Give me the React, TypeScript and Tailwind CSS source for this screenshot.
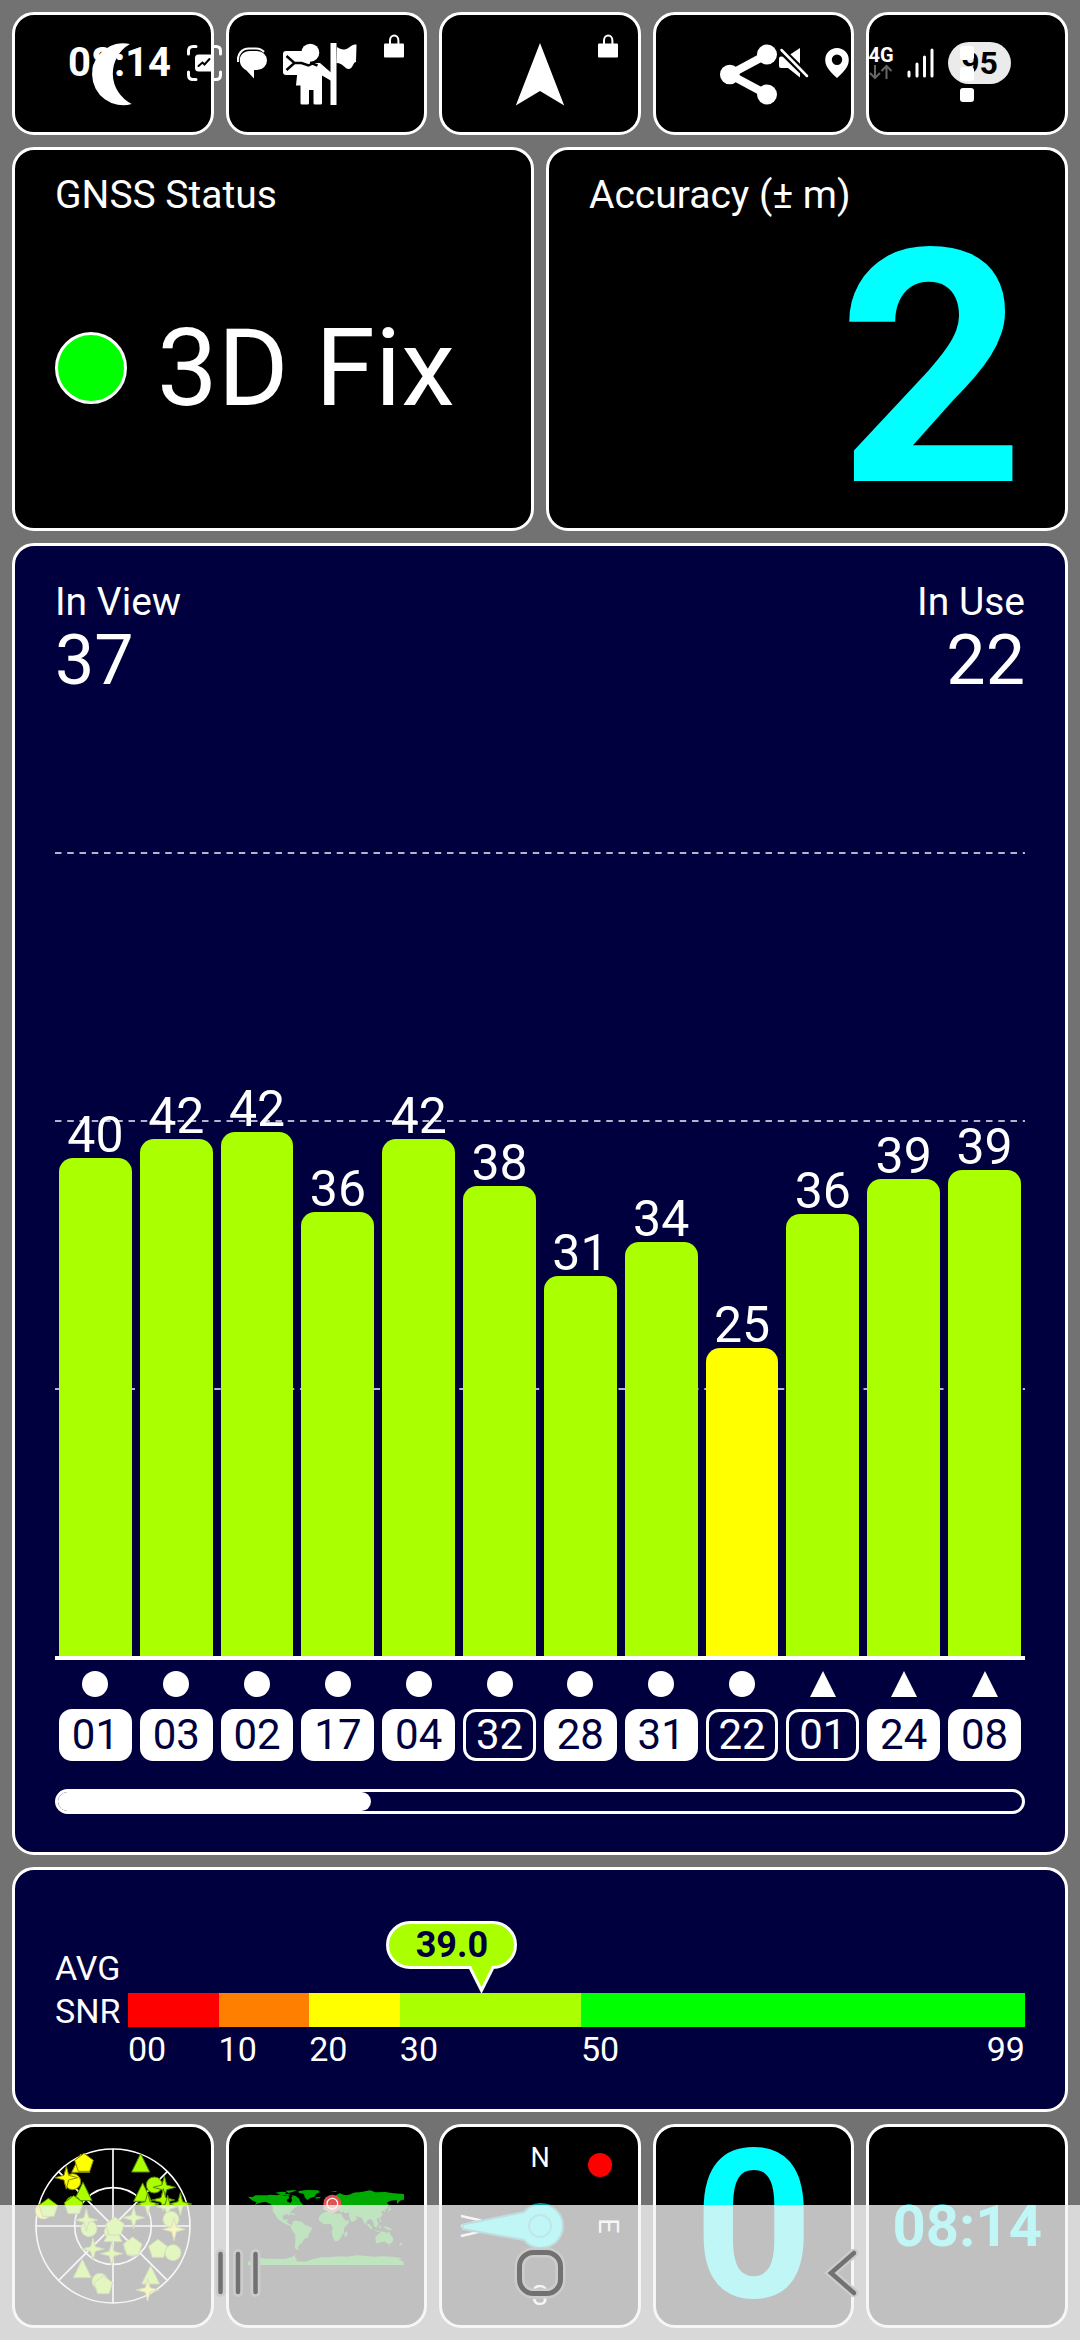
import React from 'react';
import clsx from 'clsx';

type MarkerType = 'circle' | 'triangle' | 'star' | 'pentagon';

interface Satellite {
  prn: string;
  snr: number;
  type: MarkerType;
  used: boolean;
}

// Top of the plot, in dB-Hz
const MAX_SNR = 65;

const SATELLITES: Satellite[] = [
  { prn: '01', snr: 40.3, type: 'circle', used: true },
  { prn: '03', snr: 41.8, type: 'circle', used: true },
  { prn: '02', snr: 42.4, type: 'circle', used: true },
  { prn: '17', snr: 35.9, type: 'circle', used: true },
  { prn: '04', snr: 41.8, type: 'circle', used: true },
  { prn: '32', snr: 38.0, type: 'circle', used: false },
  { prn: '28', snr: 30.7, type: 'circle', used: true },
  { prn: '31', snr: 33.5, type: 'circle', used: true },
  { prn: '22', snr: 24.9, type: 'circle', used: false },
  { prn: '01', snr: 35.7, type: 'triangle', used: false },
  { prn: '24', snr: 38.6, type: 'triangle', used: true },
  { prn: '08', snr: 39.3, type: 'triangle', used: true },
];

const IN_VIEW = 37;
const IN_USE = 22;
const AVG_SNR = 39;

const SNR_RANGES = [
  { from: '00', size: 10, color: 'bg-[#ff0000]' },
  { from: '10', size: 10, color: 'bg-[#ff8000]' },
  { from: '20', size: 10, color: 'bg-[#ffff00]' },
  { from: '30', size: 20, color: 'bg-[#aaff00]' },
  { from: '50', size: 49, color: 'bg-[#00ff00]' },
];

const SKY: { x: number; y: number; type: MarkerType; weak?: boolean }[] = [
  { x: 422, y: 162, type: 'triangle' },
  { x: 242, y: 163, type: 'triangle', weak: true },
  { x: 252, y: 160, type: 'pentagon', weak: true },
  { x: 218, y: 215, type: 'circle', weak: true },
  { x: 199, y: 203, type: 'star', weak: true },
  { x: 249, y: 248, type: 'triangle' },
  { x: 220, y: 283, type: 'circle' },
  { x: 221, y: 287, type: 'pentagon' },
  { x: 130, y: 303, type: 'circle', weak: true },
  { x: 145, y: 295, type: 'pentagon' },
  { x: 463, y: 225, type: 'circle' },
  { x: 493, y: 232, type: 'star' },
  { x: 428, y: 250, type: 'triangle' },
  { x: 443, y: 282, type: 'star' },
  { x: 490, y: 270, type: 'star' },
  { x: 503, y: 290, type: 'star' },
  { x: 541, y: 282, type: 'star' },
  { x: 401, y: 323, type: 'star' },
  { x: 513, y: 328, type: 'circle' },
  { x: 522, y: 358, type: 'star', weak: true },
  { x: 267, y: 356, type: 'circle' },
  { x: 259, y: 330, type: 'star' },
  { x: 337, y: 366, type: 'circle' },
  { x: 339, y: 371, type: 'triangle' },
  { x: 345, y: 351, type: 'pentagon' },
  { x: 398, y: 415, type: 'circle' },
  { x: 398, y: 411, type: 'pentagon' },
  { x: 279, y: 417, type: 'star' },
  { x: 335, y: 431, type: 'star' },
  { x: 474, y: 418, type: 'pentagon' },
  { x: 519, y: 428, type: 'circle' },
  { x: 247, y: 479, type: 'triangle' },
  { x: 300, y: 514, type: 'circle' },
  { x: 310, y: 527, type: 'pentagon' },
  { x: 452, y: 498, type: 'triangle' },
  { x: 443, y: 540, type: 'star', weak: true },
];

const SKY_SHAPES: Record<MarkerType, string> = {
  circle: 'M-24 0a24 24 0 1 0 48 0a24 24 0 1 0 -48 0z',
  triangle: 'M0 -31L27 24H-27z',
  star: 'M0 -34L7 -7L34 0L7 7L0 34L-7 7L-34 0L-7 -7z',
  pentagon: 'M0 -30L28 -9L17 24H-17L-28 -9z',
};

const card = 'rounded-[22px] border-3 border-white';

/* ---------- Toolbar icons ---------- */

const MoonIcon = () => (
  <svg className="size-16" viewBox="0 0 64 64" fill="#fff">
    <path d="M49 2A31 31 0 1 0 50.7 62A34 34 0 0 1 49 2z" />
  </svg>
);

const GuideIcon = () => (
  <svg className="size-16" viewBox="0 0 64 64" fill="#fff">
    <circle cx="16.3" cy="10.7" r="9" />
    <path d="M9 21h5l2.500 2L19 21h7l11.500 10v8L28 33.500V61q0 1.500-1.500 1.500h-5.500q-1.500 0-1.500-1.500V48H15v13q0 1.500-1.500 1.500H8q-1.500 0-1.500-1.500V43.500H2L4 24q.5-3 5-3z" />
    <rect x="36.500" y="1" width="6" height="62" />
    <path d="M43 5c4 3 8 3.500 12 .5c3-2.500 5-3 7.500-3L62 20c-3 0-3 7-7.500 7c-4 0-5-6-12-6z" />
  </svg>
);

const ArrowIcon = () => (
  <svg className="size-16" viewBox="0 0 64 64" fill="#fff">
    <path d="M32 1L56.200 63.500L32 49L7.800 63.500z" />
  </svg>
);

const ShareIcon = () => (
  <svg className="size-16 overflow-visible" viewBox="0 0 64 64" fill="#fff">
    <path d="M45 12.500L7.800 32.500L45 52.500" fill="none" stroke="#fff" strokeWidth="8" />
    <circle cx="7.800" cy="32.500" r="9.800" />
    <circle cx="45" cy="12.500" r="10" />
    <circle cx="45" cy="52.500" r="10" />
  </svg>
);

const MoreIcon = () => (
  <svg className="relative z-30 size-16" viewBox="0 0 64 64" fill="#fff">
    <rect x="25" y="4" width="14" height="14" rx="3" />
    <rect x="25" y="25" width="14" height="14" rx="3" />
    <rect x="25" y="46" width="14" height="14" rx="3" />
  </svg>
);

const LockIcon = () => (
  <svg className="absolute top-[19px] right-5 h-6 w-5" viewBox="0 0 20 24" fill="#fff">
    <path d="M6 11V6.500a4.200 5 0 0 1 8.400 0V11" fill="none" stroke="#fff" strokeWidth="2" />
    <rect x="0" y="9.500" width="20" height="14" rx="1" />
  </svg>
);

const TOOLS = [
  { label: 'Night mode', icon: <MoonIcon />, locked: false },
  { label: 'Guide', icon: <GuideIcon />, locked: true },
  { label: 'Navigate', icon: <ArrowIcon />, locked: true },
  { label: 'Share', icon: <ShareIcon />, locked: false },
  { label: 'More', icon: <MoreIcon />, locked: false },
];

/* ---------- System bars ---------- */

const StatusBar: React.FC = () => (
  <div className="pointer-events-none absolute inset-x-0 top-0 z-20 flex h-[126px] items-center justify-between pr-[69px] pl-[68px] text-white">
    <div className="flex items-center gap-[14px]">
      <span className="text-[40px] leading-none font-bold">08:14</span>
      <svg className="h-9 w-[38px]" viewBox="-2 0 38 36" fill="none" stroke="#fff" strokeWidth="3" strokeLinecap="round">
        <path d="M1.500 9V6q0-4.500 4.500-4.500h3M26 1.500h3q4.500 0 4.500 4.500v3M33.500 27v3q0 4.500-4.500 4.500h-3M9 34.500H6q-4.500 0-4.500-4.500v-3" />
        <rect x="8" y="9.500" width="19" height="17" rx="3.500" fill="#fff" stroke="none" />
        <path d="M11.500 21l4-3.500l2 2l5-5.500" stroke="#000" strokeWidth="2" />
      </svg>
      <svg className="h-8 w-8" viewBox="0 0 32 32" fill="#fff">
        <path d="M1 15C0 7 5 1.500 12 1.500h7q5 0 8 3.500" fill="none" stroke="#fff" strokeWidth="2" />
        <path d="M13 4h7a10 9.500 0 0 1 0 19H17v8.500L9 23C-.5 18 1 4 13 4z" />
      </svg>
      <svg className="h-[26px] w-9" viewBox="0 0 36 26">
        <rect x="0" y="1" width="27" height="24" rx="3" fill="#fff" />
        <path d="M3.500 6l8 7l-8 7M11.500 13h7l7 2.500l4-2l5 2" fill="none" stroke="#000" strokeWidth="2.500" />
      </svg>
    </div>
    <div className="flex items-center gap-[14px]">
      <svg className="h-8 w-8" viewBox="0 0 32 32" fill="#fff">
        <path d="M0 11.500q0-2 2-2h6L21 1v29.500L9 21H2q-2 0-2-2z" />
        <path d="M1 2L29 29.500" stroke="#000" strokeWidth="7" />
        <path d="M2.500 3L28 29" stroke="#fff" strokeWidth="2.500" strokeLinecap="round" />
      </svg>
      <svg className="h-8 w-[30px]" viewBox="0 0 30 32" fill="#fff">
        <path fillRule="evenodd" d="M12 1a11.800 11.800 0 0 1 11.800 12C23.800 21 16 27 12 31C8 27 .2 21 .2 13A11.800 11.800 0 0 1 12 1zM12 7.500a5.200 5.200 0 1 0 0 10.400a5.200 5.200 0 0 0 0-10.400z" />
      </svg>
      <div className="flex w-6 flex-col items-center">
        <span className="text-[20px] leading-[17px] font-bold">4G</span>
        <svg className="h-4 w-6" viewBox="0 0 24 16" fill="none" stroke="#666" strokeWidth="2">
          <path d="M6 1v13M1 9l5 5l5-5M17.500 15V2M12.500 7l5-5l5 5" />
        </svg>
      </div>
      <svg className="h-[30px] w-[27px]" viewBox="0 0 27 30" stroke="#fff" strokeWidth="3" strokeLinecap="round">
        <path d="M2 24v4M10 16v12M17.500 9v19M25 2v26" />
      </svg>
      <span className="h-[42px] w-[63px] rounded-full bg-[#ebebeb] text-center text-[32px] leading-[42px] font-bold text-black">95</span>
    </div>
  </div>
);

const NavigationBar: React.FC = () => (
  <nav className="fixed inset-x-0 bottom-0 z-20 flex h-[135px] justify-center bg-[#f4f4f4]/79">
    <button aria-label="Recent apps" className="flex w-[28%] items-center justify-center">
      <svg className="h-12 w-12" viewBox="0 0 48 48" strokeLinecap="round">
        <path d="M6.500 5v38M24 5v38M41.500 5v38" stroke="#ccc" strokeWidth="10" />
        <path d="M6.500 5v38M24 5v38M41.500 5v38" stroke="#717171" strokeWidth="4.500" />
      </svg>
    </button>
    <button aria-label="Home" className="flex w-[28%] items-center justify-center">
      <svg className="h-13 w-13" viewBox="0 0 52 52" fill="none">
        <rect x="5.500" y="5.500" width="41" height="41" rx="14" stroke="#ccc" strokeWidth="10" />
        <rect x="5.500" y="5.500" width="41" height="41" rx="14" stroke="#717171" strokeWidth="5" />
      </svg>
    </button>
    <button aria-label="Back" className="flex w-[28%] items-center justify-center">
      <svg className="h-12 w-9" viewBox="0 0 36 48" fill="none" strokeLinecap="round">
        <path d="M30 4L7 24L30 44" stroke="#ccc" strokeWidth="9" />
        <path d="M30 4L7 24L30 44" stroke="#717171" strokeWidth="4.500" />
      </svg>
    </button>
  </nav>
);

/* ---------- Panels ---------- */

const SatelliteChart: React.FC = () => (
  <section className={clsx(card, 'bg-[#00003e] px-10 pt-8 pb-[38px]')}>
    <div className="flex justify-between">
      <div>
        <h2 className="text-[39px] leading-[48px]">In View</h2>
        <p className="text-[70px] leading-[68px]">{IN_VIEW}</p>
      </div>
      <div className="text-right">
        <h2 className="text-[39px] leading-[48px]">In Use</h2>
        <p className="text-[70px] leading-[68px]">{IN_USE}</p>
      </div>
    </div>

    <div className="relative mt-[158px] h-[804px]">
      <div className="absolute inset-0 flex flex-col">
        {[0, 1, 2].map((line) => (
          <div key={line} className="flex-1">
            <svg className="block h-[2px] w-full">
              <line x1="0" y1="1" x2="100%" y2="1" stroke="#b4b4cc" strokeWidth="2" strokeDasharray="6.500 5.750" />
            </svg>
          </div>
        ))}
      </div>
      <div className="relative flex h-full">
        {SATELLITES.map((sat, idx) => (
          <div key={idx} className="flex h-full flex-1 flex-col justify-end px-1">
            <span className="text-center text-[50px] leading-[46px]">{Math.round(sat.snr)}</span>
            <div
              className={clsx('shrink-0 rounded-t-[14px]', sat.snr < 30 ? 'bg-[#ffff00]' : 'bg-[#aaff00]')}
              style={{ height: `${(sat.snr / MAX_SNR) * 100}%` }}
            ></div>
          </div>
        ))}
      </div>
    </div>

    <div className="flex border-t-4 border-white pt-[11px]">
      {SATELLITES.map((sat, idx) => (
        <div key={idx} className="flex flex-1 flex-col items-center gap-3 px-1">
          <svg className="size-[26px]" viewBox="0 0 26 26" fill="#fff">
            {sat.type === 'circle' ? <circle cx="13" cy="13" r="13" /> : <path d="M13 0L26 26H0z" />}
          </svg>
          <span
            className={clsx(
              'h-[52px] w-full rounded-[13px] border-3 border-white text-center text-[42px] leading-[46px]',
              sat.used ? 'bg-white text-[#00003e]' : 'text-white'
            )}
          >
            {sat.prn}
          </span>
        </div>
      ))}
    </div>

    <div className="mt-7 h-[25px] rounded-full border-3 border-white">
      <div className="h-full rounded-full bg-white" style={{ width: `${(SATELLITES.length / IN_VIEW) * 100}%` }}></div>
    </div>
  </section>
);

const AverageSnr: React.FC = () => (
  <section className={clsx(card, 'flex bg-[#00003e] px-10 pt-[77px] pb-10')}>
    <h2 className="w-[73px] text-[34px] leading-[43px]">AVG SNR</h2>
    <div className="relative flex flex-1 pt-[46px]">
      {SNR_RANGES.map((range, idx) => (
        <div key={range.from} style={{ width: `${(range.size / 99) * 100}%` }}>
          <div className={clsx('h-[34px]', range.color)}></div>
          <div className="mt-[2px] flex justify-between text-[34px] leading-10">
            <span>{range.from}</span>
            {idx === SNR_RANGES.length - 1 && <span>99</span>}
          </div>
        </div>
      ))}
      {/* Average value callout */}
      <div className="absolute -top-[26px] -ml-[95px]" style={{ left: `${(AVG_SNR / 99) * 100}%` }}>
        <svg className="block h-[72px] w-[131px]" viewBox="0 0 131 72">
          <path
            d="M24 1.500H107A22.500 22.500 0 0 1 107 46.500L95.500 69.500L84 46.500H24A22.500 22.500 0 0 1 24 1.500z"
            fill="#aaff00"
            stroke="#fff"
            strokeWidth="3"
          />
        </svg>
        <span className="absolute inset-x-0 top-0 text-center text-[36px] leading-[48px] font-bold text-[#00003e]">
          {AVG_SNR.toFixed(1)}
        </span>
      </div>
    </div>
  </section>
);

const SkyPlot = () => (
  <svg className="size-40" viewBox="99 108 480 480">
    <g fill="none" stroke="#fff" strokeWidth="5">
      <circle cx="339" cy="348" r="231" />
      <circle cx="339" cy="348" r="115" />
      <path d="M339 117V579M108 348H570M176 185L502 511M502 185L176 511" />
    </g>
    {SKY.map((sat, idx) => (
      <path
        key={idx}
        d={SKY_SHAPES[sat.type]}
        transform={`translate(${sat.x} ${sat.y})`}
        fill={sat.weak ? '#ffff00' : '#aaff00'}
        stroke={sat.weak ? '#8a8a00' : '#5a8a00'}
        strokeWidth="3"
      />
    ))}
  </svg>
);

const WorldMap = () => (
  <svg className="h-[78px] w-[156px]" viewBox="10 21 468 234">
    <g fill="#00aa00">
      {/* North America and Greenland */}
      <path d="M10 50l14 1l8-5h36l8-2l20 2l12-3l12 5l10-2l4 8l-8 6l2 5l10 4l4-8l-2-10l8-4l6 6l8 2l6 12l8 8l-10 2l-6-2l-4 6l-8 4l-8 8l-6 8l2 8l-8-6l-12 2l-2 10l6 6l6-4l4 2l-4 6l8 8l8 2l-4 4l-14-6l-14-8l-12-10l-8-14l-6-8v-14l-8-8l-14-6l-18 4l-14 6l6-8l-14-6z" />
      <path d="M162 33l24-3l34 1l6 5l-12 6l-4 8l-14 4l-8 6l-8-8l-2-10l-16-4z" />
      <path d="M92 38l20-3l14 2l-6 5l14 1l2 4l-24-2zM122 32l34-2l-10 5l-14 4zM140 46l14 2l10 10l-12-2zM128 96l16 4l10 6l-10-1zM212 52l16-1l-2 4l-12 1z" />
      {/* South America */}
      <path d="M146 123l12-1l14 4l8 8l20 8l2 6l-8 12l-4 12l-12 6l-6 10l-8 6l-4 10l2 6l-8-2l-4-8l2-14v-22l-8-10l-6-12l4-8z" />
      {/* Europe, Africa and Asia */}
      <path d="M234 88l4-10l10-4l-2-8l10-4l8-8l12-10l10-4l10 4l8 2l18-3l8-5l20-2l26-5l16 6l30-1l24 4l34 2l12 4l6 4l-12 4l-8-2l2 6l-14 4l-8 10l-2-12l-18 2l-12 6l6 6l-4 10l-8 4l2 8l-8-6l-4 6l4 8l-6 8l-12 4l2 8l4 8l-8-4l-4 6l6 10l-8-8l-4-14l-8-6l-10 8l-2 12l-6-8l-6-14l-12-4l-8-2l6 8l-10 8l-8 2l-8-18l2-10l-14 2l-4-6l-6 4l-8-8l-10 4l-8 6z" />
      <path d="M230 102l14-7l18-1l12 7l14-1l8 14l8 8l10-1l-4 10l-12 12v16l-6 6l-4 10l-10 9h-8l-6-14l-3-14l3-12l-6-12l-20 1l-14-10l-2-10z" />
      <path d="M300 158l8-5v10l-5 9l-4-4zM238 60l6-2l3 12l-8 2zM258 34l20-1l-6 3zM312 45l12-6l18-2l-16 6zM432 78l8 10l-8 6l-4 2l6-10z" />
      {/* Indonesia and Oceania */}
      <path d="M368 130l8 4l8 12l-6 2l-10-12zM388 132l10-6l4 6l-6 10l-8-2zM404 136l6 2l-2 8l-4-3zM418 139l12 2l14 8l-10 2l-14-6zM384 150l16 2l10 2l-10 1zM402 112l5 6l4 10l-6-4z" />
      <path d="M392 170l10-8l10-8l10 2l4 5l6-7l6 10l8 10l-2 12l-8 6l-10-2l-6-6l-16 4l-10 2zM468 188l6 2l-6 6l-6 4zM430 195h5l-2 5z" />
      {/* Antarctica */}
      <path d="M10 255V245l20-2l16-8l34 1l40 1l20-5l14-8l-4 8l8 6l-6 5l30 2l24-8l22-5l30-1l28-2l20 1l30-4l24 1l24 3l30-1l28 1l30 5l-10 4l14 5l2 11z" />
    </g>
    <circle cx="263" cy="71" r="27" fill="#e05252" />
    <circle cx="263" cy="71" r="16" fill="#e05252" stroke="#fff" strokeWidth="4" />
  </svg>
);

const Compass = () => (
  <svg className="size-[190px]" viewBox="-95 -95 190 190">
    <g fill="#fff" textAnchor="middle" fontFamily="Roboto, sans-serif" fontSize="27">
      <text y="-59">N</text>
      <text y="-59" transform="rotate(90)">E</text>
      <text y="-59" transform="rotate(180)">S</text>
      <text y="-59" transform="rotate(270)">W</text>
    </g>
    <circle cx="60" cy="-61" r="12" fill="#ff0000" />
    <path
      d="M-77 -1.500Q-78 1 -77 3L-16 14A22 22 0 1 0 -16 -14z"
      fill="#00ffff"
      stroke="#008b8b"
      strokeWidth="2"
    />
    <circle r="11" fill="none" stroke="#00b4b4" strokeWidth="2" />
  </svg>
);

const PAGES = [
  { label: 'Sky view', content: <SkyPlot /> },
  { label: 'World map', content: <WorldMap /> },
  { label: 'Compass', content: <Compass /> },
  { label: 'Speed', content: <span className="text-[208px] leading-[198px] font-bold text-[#00ffff]">0</span> },
  { label: 'Time', content: <span className="text-[58px] leading-none font-bold text-[#00ffff]">08:14</span> },
];

const App: React.FC = () => {
  return (
    <div className="relative min-h-screen bg-[#727272] font-['Roboto',sans-serif] text-white">
      <StatusBar />

      <main className="flex flex-col gap-3 p-3">
        <div className="grid grid-cols-5 gap-3">
          {TOOLS.map((tool) => (
            <button
              key={tool.label}
              aria-label={tool.label}
              className={clsx(card, 'relative flex h-[123px] items-center justify-center bg-black')}
            >
              {tool.icon}
              {tool.locked && <LockIcon />}
            </button>
          ))}
        </div>

        <div className="grid grid-cols-2 gap-3">
          <section className={clsx(card, 'flex flex-col bg-black px-10 pt-[21px] pb-3')}>
            <h2 className="text-[39px] leading-[48px]">GNSS Status</h2>
            <div className="flex flex-1 items-center gap-[30px]">
              <span className="size-[72px] rounded-full border-3 border-white bg-[#00ff00]"></span>
              <span className="text-[108px] leading-none">3D Fix</span>
            </div>
          </section>
          <section className={clsx(card, 'bg-black px-10 pt-[21px] pb-[6px]')}>
            <h2 className="text-[39px] leading-[48px]">Accuracy (± m)</h2>
            <p className="text-right text-[326px] leading-[303px] font-bold text-[#00ffff]">2</p>
          </section>
        </div>

        <SatelliteChart />
        <AverageSnr />

        <div className="grid grid-cols-5 gap-3">
          {PAGES.map((page) => (
            <button
              key={page.label}
              aria-label={page.label}
              className={clsx(card, 'flex h-[204px] items-center justify-center bg-black')}
            >
              {page.content}
            </button>
          ))}
        </div>
      </main>

      <NavigationBar />
    </div>
  );
};

export default App;
